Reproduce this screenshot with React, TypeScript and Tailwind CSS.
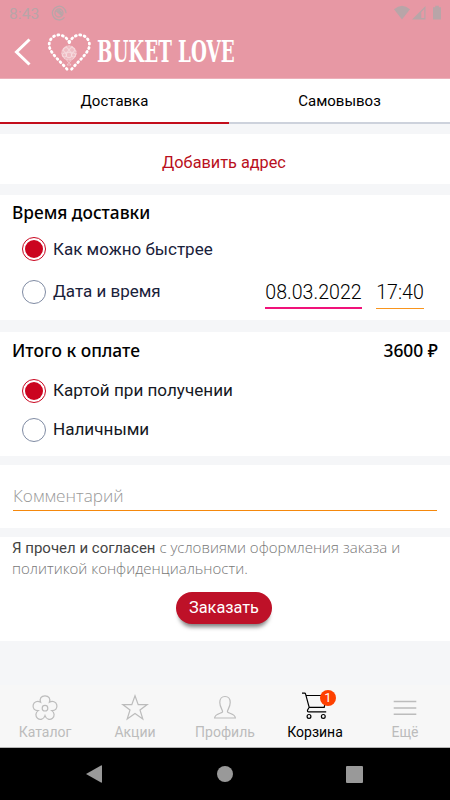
import type { ReactNode } from 'react';

const tabs = [
    { label: 'Каталог', icon: <FlowerIcon /> },
    { label: 'Акции', icon: <StarIcon /> },
    { label: 'Профиль', icon: <ProfileIcon /> },
    { label: 'Корзина', icon: <CartIcon />, active: true, badge: 1 },
    { label: 'Ещё', icon: <MenuIcon /> },
];

function FlowerIcon() {
    return (
        <svg className="h-7 w-7" viewBox="0 0 28 28" fill="none" stroke="currentColor" strokeWidth="1.2">
            <path d="M9.6 9.2C8.3 5.6 10.2 2.8 14 2.8s5.7 2.8 4.4 6.4c3.3-1.6 6.600-.4 7.400 2.700.8 3.300-1.400 5.800-5 5.700 2.800 2.200 3.100 5.400.7 7.600-2.600 2.200-6.300 1.100-7.500-2.600-1.200 3.700-4.900 4.800-7.500 2.600-2.400-2.200-2.100-5.400.7-7.600-3.600.1-5.800-2.400-5-5.700.8-3.100 4.100-4.300 7.400-2.700Z" />
            <circle cx="14" cy="15.2" r="2.8" />
        </svg>
    );
}

function StarIcon() {
    return (
        <svg className="h-7 w-7" viewBox="0 0 28 28" fill="none" stroke="currentColor" strokeWidth="1.2">
            <path d="m14 2.800 3.200 8.800h9L19 17l2.800 9L14 20.600 6.200 26 9 17l-7.200-5.400h9Z" />
        </svg>
    );
}

function ProfileIcon() {
    return (
        <svg className="h-7 w-7" viewBox="0 0 28 28" fill="none" stroke="currentColor" strokeWidth="1.2">
            <path d="M11.500 19c.7-1.700-2.700-4.300-2.700-9.500 0-3.800 2-6 5.200-6s5.200 2.200 5.200 6c0 5.200-3.400 7.800-2.700 9.500.6 1.500 7.500 1.400 7.900 6H3.600c.4-4.600 7.300-4.500 7.900-6Z" />
        </svg>
    );
}

function CartIcon() {
    return (
        <svg className="h-7 w-7 overflow-visible" viewBox="0 0 28 28" fill="none" stroke="currentColor" strokeWidth="1.2">
            <path d="M1 .2h2.600q.8 0 1 .9l3.600 13.200M5 2.500h20.500l-2.300 11.800H8.200L6.600 17q-.6 1.900 1.200 1.900h17.400" />
            <circle cx="8" cy="23.400" r="1.900" />
            <circle cx="22.300" cy="23.400" r="1.900" />
        </svg>
    );
}

function MenuIcon() {
    return (
        <svg className="h-7 w-7" viewBox="0 0 28 28" fill="none" stroke="currentColor" strokeWidth="1.5">
            <path d="M2.700 8.500h22.600M2.700 15h22.600M2.700 21.200h22.600" />
        </svg>
    );
}

function Logo() {
    return (
        <svg className="h-11 w-[58px] shrink-0" viewBox="0 0 58 44" fill="none" stroke="white">
            <g strokeWidth="2.800" strokeLinecap="round" strokeDasharray="1 3.500">
                <path d="M29.300 11.500C26.800 5.800 21 2.800 16 4.400 10.500 6.200 8 12 9.700 17c2.500 7 11.300 14 18 22" />
                <path d="M29.300 11.500C31.800 5.800 37.600 2.800 42.600 4.400 48.100 6.200 50.600 12 48.900 17c-2.500 7-11.300 14-18 22" />
            </g>
            <circle cx="29" cy="22" r="7.600" fill="white" stroke="none" opacity="0.350" />
            <g strokeWidth="0.700" opacity="0.600">
                <circle cx="29" cy="22" r="7.200" strokeDasharray="2 1" />
                <circle cx="26" cy="19" r="2.500" />
                <circle cx="32" cy="19" r="2.500" />
                <circle cx="29" cy="24" r="2.800" />
                <circle cx="24.500" cy="24" r="2" />
                <circle cx="33.500" cy="24" r="2" />
                <path d="m26.500 29.500 2.500 2 2.500-2M29 31.500l-2 2.500h4L29 31.500" />
            </g>
        </svg>
    );
}

function Radio({ checked = false, children }: { checked?: boolean; children: ReactNode }) {
    return (
        <label className="flex items-center">
            <span
                className={`mr-[7px] flex h-6 w-6 items-center justify-center rounded-full border ${checked ? 'border-[#c9051f]' : 'border-[#7f8ba3]'}`}
            >
                {checked && <span className="h-[18px] w-[18px] rounded-full bg-[#cb041f]" />}
            </span>
            {children}
        </label>
    );
}

function StatusBar() {
    return (
        <div className="flex h-[26px] items-center pr-[7px] pl-[9px] text-[#b8a5a8]">
            <span className="pt-0.5 text-[15.500px] leading-6 tracking-[0.100px]">8:43</span>
            <svg className="ml-3 h-4 w-4" viewBox="0 0 16 16" fill="none" stroke="currentColor" strokeWidth="1.300">
                <path d="M13.500 12.300A6.800 6.800 0 1 1 15 8.200M12 13.800A6.800 6.800 0 0 1 8 15" />
                <circle cx="8" cy="8" r="4" />
                <path d="M5.500 5.500 11 10.500M7.500 5 11 8.500" strokeWidth="1.800" />
            </svg>
            <svg className="ml-auto h-4 w-[50px]" viewBox="0 0 50 16" fill="currentColor">
                <path d="M1 4.300Q9-2.700 17 4.300L9 14.500Z" />
                <path fillRule="evenodd" d="M32.500 1v13.500H19Zm-1.200 3-3 3v6h3Z" />
                <path d="M40 2.200h2.200V.8h3.600v1.400H48v12.300h-8Z" />
            </svg>
        </div>
    );
}

export default function App() {
    return (
        <div className="flex h-[800px] w-[450px] flex-col overflow-hidden bg-[#f5f6f8] font-['Roboto',sans-serif] text-black">
            <header className="h-[79px] shrink-0 border-b border-[#edb0ba] bg-[#e798a4]">
                <StatusBar />
                <div className="flex h-[52px] items-center pl-[14px]">
                    <svg className="h-7 w-[17px]" viewBox="0 0 17 28" fill="none" stroke="white" strokeWidth="3">
                        <path d="M15.500 1.500 2.500 14l13 12.500" />
                    </svg>
                    <div className="ml-[9px] pt-0.5">
                        <Logo />
                    </div>
                    <h1 className="-ml-px w-[138px] origin-left scale-x-[0.700] font-['DejaVu_Serif_Condensed','DejaVu_Serif',serif] text-[29px] leading-[54px] font-bold whitespace-nowrap text-white">
                        BUKET LOVE
                    </h1>
                </div>
            </header>

            <div className="grid h-[45px] shrink-0 grid-cols-[229px_221px] bg-white text-center text-[15px] leading-[43px]">
                <button className="border-b-2 border-[#c30d1b] pt-0.5 leading-[41px]">Доставка</button>
                <button className="border-b-2 border-[#cdd2dc] pt-0.5 leading-[41px]">Самовывоз</button>
            </div>

            <main className="flex shrink-0 flex-col">
                <button className="mt-[10px] h-[50px] bg-white pt-2 pr-0.5 text-[16.300px] text-[#b90f20]">
                    Добавить адрес
                </button>

                <section className="mt-[11px] h-[125px] bg-white px-3 pt-[6px]">
                    <h2 className="font-['Noto_Sans',sans-serif] text-[17.300px] leading-6 font-medium">Время доставки</h2>
                    <div className="mt-3 pl-[10px] text-[17px] leading-6 text-[#19213a]">
                        <Radio checked>Как можно быстрее</Radio>
                    </div>
                    <div className="mt-[14px] flex h-[35px] items-start justify-between pr-[14px] pl-[10px] text-[17px] text-[#19213a]">
                        <div className="pt-1">
                            <Radio>Дата и время</Radio>
                        </div>
                        <div className="flex gap-[14px] text-[19.600px] leading-9 text-black">
                            <span className="h-[34px] w-[97px] border-b-2 border-[#f0127a] text-center font-light whitespace-nowrap">
                                08.03.2022
                            </span>
                            <span className="h-[34px] w-12 border-b border-[#f9951d] text-center font-light">17:40</span>
                        </div>
                    </div>
                </section>

                <section className="mt-3 h-[124px] bg-white px-3 pt-[6px]">
                    <div className="flex justify-between font-['Noto_Sans',sans-serif] text-[17.400px] leading-6 font-medium">
                        <h2>Итого к оплате</h2>
                        <span>3600 ₽</span>
                    </div>
                    <div className="mt-4 flex flex-col gap-[14px] pl-[10px] text-[17.100px] leading-[25px] text-[#151823]">
                        <Radio checked>Картой при получении</Radio>
                        <Radio>Наличными</Radio>
                    </div>
                </section>

                <section className="mt-[9px] h-[63px] bg-white px-[13px] pt-5">
                    <div className="h-[26px] border-b border-[#f5880c] font-['Open_Sans',sans-serif] text-[17.200px] leading-[22px] font-light text-[#999]">
                        Комментарий
                    </div>
                </section>

                <section className="mt-[9px] flex h-[104px] flex-col items-center bg-white">
                    <p className="h-[43px] w-full pl-3 font-['Open_Sans',sans-serif] text-[15px] leading-5 font-light whitespace-nowrap text-[#777]">
                        <span className="font-['Roboto',sans-serif] font-normal text-[#444]">Я прочел и согласен</span> с условиями оформления заказа и
                        <br />
                        политикой конфиденциальности.
                    </p>
                    <button className="mt-3 mr-0.5 h-8 w-24 rounded-full bg-[#be1128] text-[16.300px] text-white shadow-[0_6px_4px_-3px_#00000080]">
                        Заказать
                    </button>
                </section>
            </main>

            <nav className="mt-auto grid h-[63px] shrink-0 grid-cols-5 border-b border-[#b5b5b5] bg-[#f7f7f7] text-[14px] text-[#bcbcbc]">
                {tabs.map((tab) => (
                    <button key={tab.label} className={`flex flex-col items-center pt-2 ${tab.active ? 'text-black' : ''}`}>
                        <span className="relative">
                            {tab.icon}
                            {tab.badge && (
                                <span className="absolute -top-[3px] left-[19px] h-4 w-4 rounded-full bg-[#fe4000] text-[13px] leading-4 text-white">
                                    {tab.badge}
                                </span>
                            )}
                        </span>
                        <span className="mt-[3px] leading-4">{tab.label}</span>
                    </button>
                ))}
            </nav>

            <div className="flex h-[52px] shrink-0 items-center justify-between bg-black pr-[87px] pl-[86px]">
                <svg className="h-[18px] w-4" viewBox="0 0 16 18" fill="#999">
                    <path d="M0 9 15 .5q1-.5 1 .5v16q0 1-1 .5Z" />
                </svg>
                <span className="ml-0.5 h-4 w-4 rounded-full bg-[#999]" />
                <span className="h-[17px] w-[17px] rounded-[1px] bg-[#999]" />
            </div>
        </div>
    );
}
